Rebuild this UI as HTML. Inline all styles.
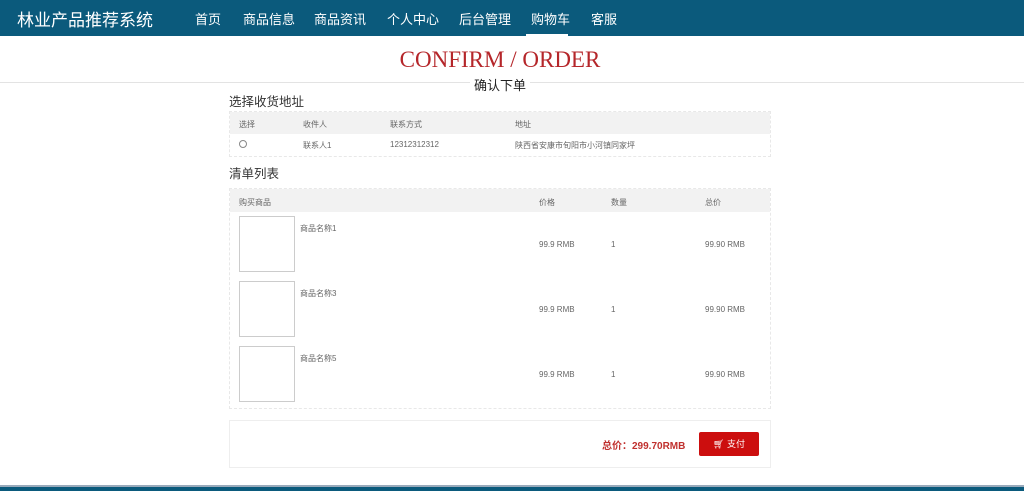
<!DOCTYPE html>
<html><head><meta charset="utf-8"><style>
*{margin:0;padding:0;box-sizing:border-box}
body{width:1024px;height:491px;overflow:hidden;background:#fff;font-family:"Liberation Sans","Noto Sans CJK SC",sans-serif;position:relative}
.hd{position:absolute;left:0;top:0;width:1024px;height:36px;background:#0b5a7c;color:#fff}
.logo{position:absolute;left:17px;top:6px;font-size:17px}
.nav span{position:absolute;top:9px;font-size:13px}
.ul{position:absolute;left:526px;top:34px;width:42px;height:2px;background:#fff}
.t1{position:absolute;left:0;width:1000px;text-align:center;top:47px;font-family:"Liberation Serif",serif;font-size:23px;color:#b5262a}
.line{position:absolute;left:0;top:82px;width:1024px;height:1px;background:#e3e3e3}
.t2{position:absolute;left:470px;top:75px;background:#fff;padding:0 4px;font-size:13px;color:#222}
.h{position:absolute;left:229px;font-size:12.5px;color:#333}
.box{position:absolute;left:229px;width:542px;border:1px dashed #e8e8e8;font-size:8px;color:#666}
.th{background:#f2f2f2;position:relative}
.c{position:absolute}
.img{position:absolute;left:9px;width:56px;height:56px;border:1px solid #ccc}
.ft{position:absolute;left:0;top:485px;width:1024px;height:6px;background:#0b5a7c;border-top:2px solid #9ab}
.btn{position:absolute;left:699px;top:432px;width:60px;height:24px;background:#cc0e0e;color:#fff;font-size:9px;text-align:center;line-height:24px;border-radius:2px}
</style></head><body>
<div class="hd"><div class="logo">林业产品推荐系统</div>
<div class="nav"><span style="left:195px">首页</span><span style="left:243px">商品信息</span><span style="left:314px">商品资讯</span><span style="left:387px">个人中心</span><span style="left:459px">后台管理</span><span style="left:531px">购物车</span><span style="left:591px">客服</span></div>
<div class="ul"></div></div>
<div class="t1">CONFIRM / ORDER</div>
<div class="line"></div>
<div class="t2">确认下单</div>
<div class="h" style="top:91px">选择收货地址</div>
<div class="box" style="top:111px;height:46px">
<div class="th" style="height:22px"><span class="c" style="left:9px;top:7px">选择</span><span class="c" style="left:73px;top:7px">收件人</span><span class="c" style="left:160px;top:7px">联系方式</span><span class="c" style="left:285px;top:7px">地址</span></div>
<span class="c" style="left:9px;top:28px;width:8px;height:8px;border:1px solid #888;border-radius:50%"></span>
<span class="c" style="left:73px;top:28px">联系人1</span><span class="c" style="left:160px;top:28px">12312312312</span><span class="c" style="left:285px;top:28px">陕西省安康市旬阳市小河镇同家坪</span>
</div>
<div class="h" style="top:163px">清单列表</div>
<div class="box" style="top:188px;height:221px">
<div class="th" style="height:23px"><span class="c" style="left:9px;top:8px">购买商品</span><span class="c" style="left:309px;top:8px">价格</span><span class="c" style="left:381px;top:8px">数量</span><span class="c" style="left:475px;top:8px">总价</span></div>
<div class="img" style="top:27px"></div><span class="c" style="left:70px;top:34px">商品名称1</span><span class="c" style="left:309px;top:51px">99.9 RMB</span><span class="c" style="left:381px;top:51px">1</span><span class="c" style="left:475px;top:51px">99.90 RMB</span>
<div class="img" style="top:92px"></div><span class="c" style="left:70px;top:99px">商品名称3</span><span class="c" style="left:309px;top:116px">99.9 RMB</span><span class="c" style="left:381px;top:116px">1</span><span class="c" style="left:475px;top:116px">99.90 RMB</span>
<div class="img" style="top:157px"></div><span class="c" style="left:70px;top:164px">商品名称5</span><span class="c" style="left:309px;top:181px">99.9 RMB</span><span class="c" style="left:381px;top:181px">1</span><span class="c" style="left:475px;top:181px">99.90 RMB</span>
</div>
<div class="box" style="top:420px;height:48px;border-style:solid;border-color:#eee"></div>
<div style="position:absolute;left:602px;top:437px;font-size:10px;font-weight:bold;color:#c0302e">总价：299.70RMB</div>
<div class="btn">🛒︎ 支付</div>
<div class="ft"></div>
</body></html>
